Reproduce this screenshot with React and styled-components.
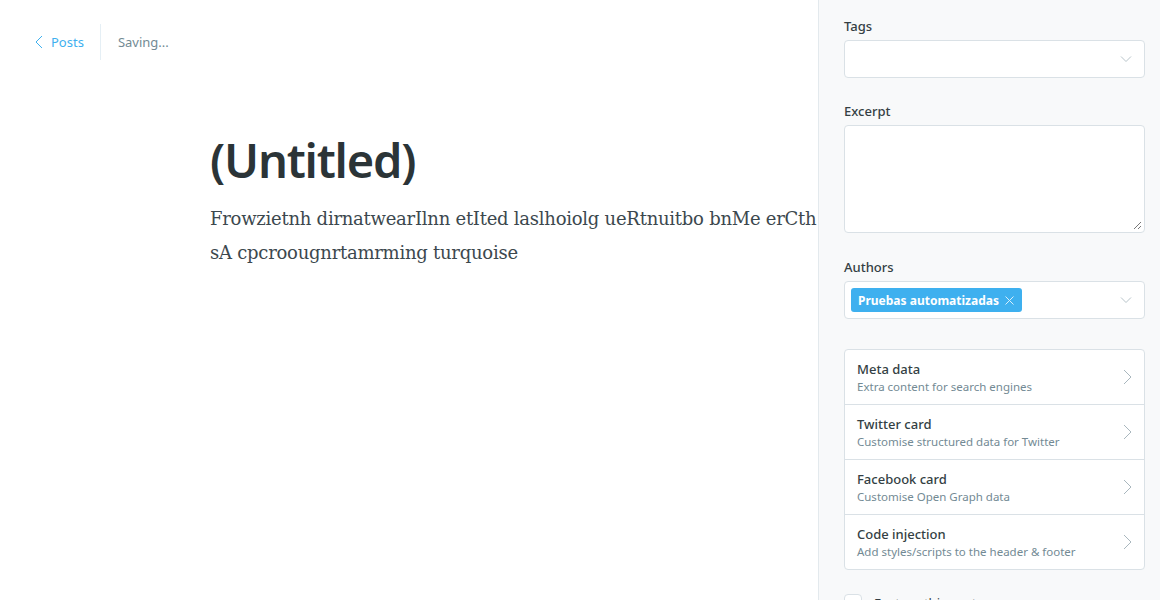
import React from "react";
import styled, {createGlobalStyle} from "styled-components";

const Global = createGlobalStyle`
    html, body {
        margin: 0;
        padding: 0;
        background: #fff;
        font-family: "Noto Sans", "Open Sans", sans-serif;
        overflow: hidden;
    }
    * { box-sizing: border-box; }
`;

const Page = styled.div`
    display: flex;
    width: 1160px;
    height: 600px;
    overflow: hidden;
`;

const Main = styled.div`
    flex: 1;
    min-width: 0;
    overflow: hidden;
`;

const Header = styled.div`
    display: flex;
    align-items: center;
    height: 84px;
    padding: 0 0 0 35px;
`;

const BackLink = styled.a`
    display: flex;
    align-items: center;
    gap: 8px;
    color: #3eb0ef;
    font-size: 13px;
    text-decoration: none;
    padding-right: 16px;
    height: 36px;
    border-right: 1px solid #e5eff5;
`;

const Status = styled.span`
    color: #738a94;
    font-size: 13px;
    padding-left: 17px;
`;

const Editor = styled.div`
    width: 740px;
    padding-left: 210px;
    padding-top: 42px;
    box-sizing: content-box;
`;

const Title = styled.h1`
    margin: 0;
    font-size: 47px;
    font-weight: 600;
    line-height: 68px;
    color: #2b3437;
    letter-spacing: -1.2px;
`;

const Body = styled.p`
    margin: 8px 0 0;
    font-family: "DejaVu Serif", "Liberation Serif", serif;
    font-size: 18px;
    line-height: 34px;
    color: #3c484e;
    white-space: nowrap;
    letter-spacing: -0.25px;
`;

const Sidebar = styled.aside`
    width: 342px;
    flex: none;
    height: 600px;
    background: #f8f9fa;
    border-left: 1px solid #e3e9ed;
    padding: 17px 15px 0 25px;
    display: flex;
    flex-direction: column;
`;

const Field = styled.div`
    margin-bottom: ${p => p.$gap || 24}px;
`;

const Label = styled.label`
    display: block;
    font-size: 13px;
    font-weight: 500;
    color: #343f44;
    line-height: 18px;
    margin-bottom: 5px;
`;

const SelectBox = styled.div`
    height: 38px;
    background: #fff;
    border: 1px solid #dae1e6;
    border-radius: 4px;
    display: flex;
    align-items: center;
    padding: 0 12px 0 6px;
`;

const TextArea = styled.div`
    position: relative;
    height: 108px;
    background: #fff;
    border: 1px solid #dae1e6;
    border-radius: 4px;
`;

const Grip = styled.svg`
    position: absolute;
    right: 2px;
    bottom: 2px;
`;

const Token = styled.span`
    display: inline-flex;
    align-items: center;
    gap: 6px;
    height: 24px;
    padding: 0 8px 0 7px;
    background: #3eb0ef;
    color: #fff;
    font-size: 12px;
    font-weight: 700;
    border-radius: 3px;
`;

const Chevron = styled.span`
    margin-left: auto;
    display: flex;
`;

const Cards = styled.div`
    margin-top: 6px;
    background: #fff;
    border: 1px solid #dae1e6;
    border-radius: 4px;
`;

const Card = styled.div`
    box-sizing: content-box;
    height: 54px;
    display: flex;
    align-items: center;
    padding: 0 12px;
    border-top: ${p => (p.$first ? "none" : "1px solid #dae1e6")};
`;

const CardText = styled.div`
    display: flex;
    flex-direction: column;
`;

const CardTitle = styled.span`
    font-size: 13px;
    font-weight: 500;
    color: #343f44;
    line-height: 18px;
`;

const CardSub = styled.span`
    font-size: 11.5px;
    color: #738a94;
    line-height: 17px;
`;

const CheckRow = styled.div`
    display: flex;
    align-items: center;
    gap: 12px;
    margin-top: 24px;
    font-size: 13px;
    color: #343f44;
`;

const Check = styled.span`
    width: 18px;
    height: 18px;
    border: 1px solid #dae1e6;
    border-radius: 4px;
    background: #fff;
`;

const ArrowDown = () => (
    <svg width="12" height="8" viewBox="0 0 12 8" fill="none">
        <path d="M1 1.5l5 5 5-5" stroke="#b8c4ca" strokeWidth="1"/>
    </svg>
);

const ArrowRight = () => (
    <svg width="9" height="16" viewBox="0 0 9 16" fill="none">
        <path d="M1 1l7 7-7 7" stroke="#a9b7be" strokeWidth="1"/>
    </svg>
);

const cards = [
    ["Meta data", "Extra content for search engines"],
    ["Twitter card", "Customise structured data for Twitter"],
    ["Facebook card", "Customise Open Graph data"],
    ["Code injection", "Add styles/scripts to the header & footer"],
];

export default function App() {
    return (
        <Page>
            <Global/>
            <Main>
                <Header>
                    <BackLink href="#">
                        <svg width="8" height="14" viewBox="0 0 8 14" fill="none">
                            <path d="M7 1L1 7l6 6" stroke="#3eb0ef" strokeWidth="1"/>
                        </svg>
                        Posts
                    </BackLink>
                    <Status>Saving...</Status>
                </Header>
                <Editor>
                    <Title>(Untitled)</Title>
                    <Body>
                        Frowzietnh dirnatwearIlnn etIted laslhoiolg ueRtnuitbo bnMe erCth
                        <br/>
                        sA cpcroougnrtamrming turquoise
                    </Body>
                </Editor>
            </Main>
            <Sidebar>
                <Field>
                    <Label>Tags</Label>
                    <SelectBox>
                        <Chevron><ArrowDown/></Chevron>
                    </SelectBox>
                </Field>
                <Field $gap={25}>
                    <Label>Excerpt</Label>
                    <TextArea>
                        <Grip width="9" height="9" viewBox="0 0 9 9">
                            <path d="M8 1L1 8M8 5L5 8" stroke="#777" strokeWidth="1"/>
                        </Grip>
                    </TextArea>
                </Field>
                <Field>
                    <Label>Authors</Label>
                    <SelectBox>
                        <Token>
                            Pruebas automatizadas
                            <svg width="9" height="9" viewBox="0 0 9 9">
                                <path d="M0.5 0.5l8 8M8.5 0.5l-8 8" stroke="#fff" strokeWidth="1" opacity="0.8"/>
                            </svg>
                        </Token>
                        <Chevron><ArrowDown/></Chevron>
                    </SelectBox>
                </Field>
                <Cards>
                    {cards.map(([t, s], i) => (
                        <Card key={t} $first={i === 0}>
                            <CardText>
                                <CardTitle>{t}</CardTitle>
                                <CardSub>{s}</CardSub>
                            </CardText>
                            <Chevron><ArrowRight/></Chevron>
                        </Card>
                    ))}
                </Cards>
                <CheckRow>
                    <Check/>
                    Feature this post
                </CheckRow>
            </Sidebar>
        </Page>
    );
}
